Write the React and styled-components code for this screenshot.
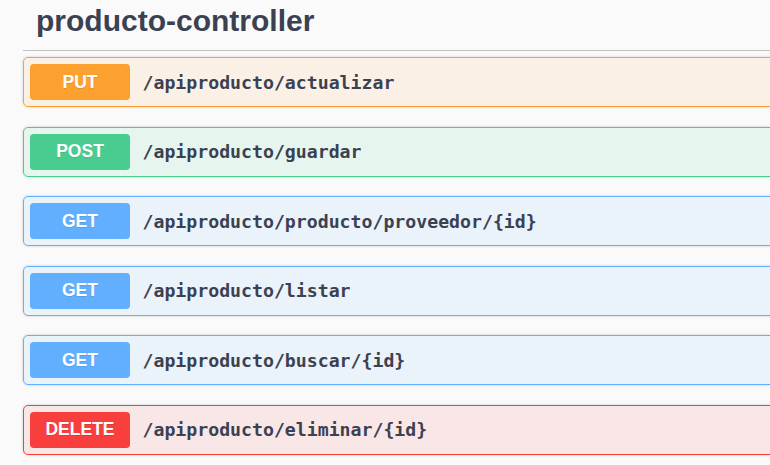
import React from "react";
import styled, { createGlobalStyle } from "styled-components";

const Global = createGlobalStyle`
  html, body {
    margin: 0;
    padding: 0;
    background: #fafafa;
    overflow: hidden;
  }
  body {
    font-family: "Liberation Sans", Arial, sans-serif;
    color: #3b4151;
  }
`;

const METHODS = {
  PUT: "252,161,48",
  POST: "73,204,144",
  GET: "97,175,254",
  DELETE: "249,62,62",
};

const Wrapper = styled.div`
  padding-left: 23px;
  width: 820px;
`;

const TagHeading = styled.h3`
  margin: 0 0 6px;
  padding: 4px 0 11.5px 13px;
  font-family: "Liberation Sans", Arial, sans-serif;
  font-weight: 700;
  font-size: 30px;
  line-height: 34.5px;
  color: #3b4151;
  border-bottom: 1px solid rgba(59, 65, 81, 0.3);
`;

const Block = styled.div`
  margin-bottom: 19.5px;
  border: 1px solid rgb(${(p) => p.$rgb});
  background: rgba(${(p) => p.$rgb}, 0.1);
  border-radius: 5px;
  box-shadow: 0 0 3px rgba(0, 0, 0, 0.19);
`;

const Summary = styled.div`
  display: flex;
  align-items: center;
  padding: 6px;
`;

const Badge = styled.span`
  display: flex;
  align-items: center;
  justify-content: center;
  min-width: 100px;
  height: 36px;
  border-radius: 3.75px;
  background: rgb(${(p) => p.$rgb});
  color: #fff;
  font-family: "Liberation Sans", Arial, sans-serif;
  font-weight: 700;
  font-size: 17.5px;
  text-shadow: 0 1px 0 rgba(0, 0, 0, 0.1);
`;

const Path = styled.span`
  padding: 0 12.5px;
  font-family: "DejaVu Sans Mono", "Liberation Mono", monospace;
  font-weight: 700;
  font-size: 18.2px;
  color: #3b4151;
`;

const ops = [
  ["PUT", "/apiproducto/actualizar"],
  ["POST", "/apiproducto/guardar"],
  ["GET", "/apiproducto/producto/proveedor/{id}"],
  ["GET", "/apiproducto/listar"],
  ["GET", "/apiproducto/buscar/{id}"],
  ["DELETE", "/apiproducto/eliminar/{id}"],
];

export default function App() {
  return (
    <>
      <Global />
      <Wrapper>
        <TagHeading>producto-controller</TagHeading>
        {ops.map(([m, p], i) => (
          <Block key={i} $rgb={METHODS[m]}>
            <Summary>
              <Badge $rgb={METHODS[m]}>{m}</Badge>
              <Path>{p}</Path>
            </Summary>
          </Block>
        ))}
      </Wrapper>
    </>
  );
}
